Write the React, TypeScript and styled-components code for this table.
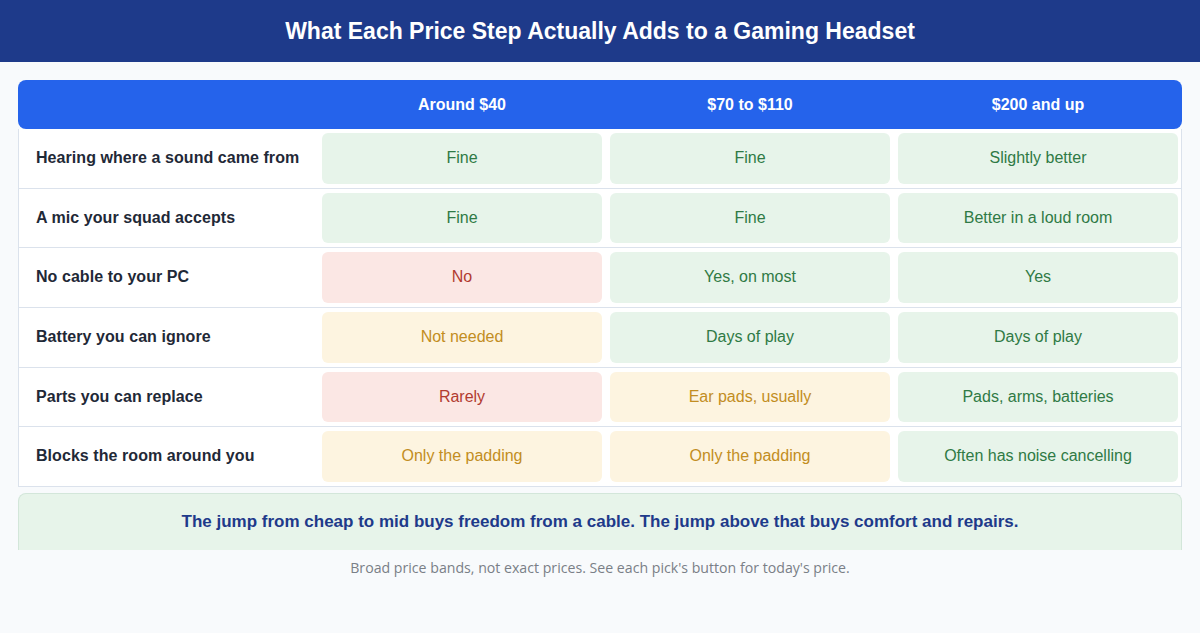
import React from "react";
import styled, { createGlobalStyle } from "styled-components";

const Global = createGlobalStyle`
  html, body { margin: 0; padding: 0; background: #f8fafc; }
  body { font-family: "Liberation Sans", Arial, sans-serif; }
  * { box-sizing: border-box; }
`;

const Page = styled.div`
  width: 1200px;
  height: 633px;
  background: #f8fafc;
  display: flex;
  flex-direction: column;
`;

const TitleBar = styled.header`
  height: 62px;
  background: #1e3a8a;
  display: flex;
  align-items: center;
  justify-content: center;
`;

const Title = styled.h1`
  margin: 0;
  color: #ffffff;
  font-size: 23px;
  font-weight: 700;
  font-family: "Liberation Sans", Arial, sans-serif;
`;

const Main = styled.main`
  padding: 18px 18px 0 18px;
  display: flex;
  flex-direction: column;
`;

const Table = styled.div`
  display: flex;
  flex-direction: column;
`;

const HeadRow = styled.div`
  display: grid;
  grid-template-columns: 1fr 280px 280px 280px;
  column-gap: 8px;
  padding: 0 4px 0 0;
  height: 49px;
  align-items: center;
  background: #2563eb;
  border-radius: 8px;
`;

const HeadCell = styled.div`
  color: #ffffff;
  font-size: 16px;
  font-weight: 700;
  text-align: center;
`;

const Row = styled.div`
  display: grid;
  grid-template-columns: 1fr 280px 280px 280px;
  column-gap: 8px;
  padding: 4px 3px 4px 0;
  background: #ffffff;
  border: 1px solid #dbe2ec;
  border-top: none;
  height: 59.7px;
`;

const Label = styled.div`
  display: flex;
  align-items: center;
  padding-left: 17px;
  padding-bottom: 1px;
  font-size: 16px;
  font-weight: 700;
  letter-spacing: 0.06px;
  color: #1f2937;
`;

type Tone = "good" | "bad" | "mid";

const tones: Record<Tone, { bg: string; fg: string }> = {
  good: { bg: "#e7f4ea", fg: "#2f7a45" },
  bad: { bg: "#fbe7e4", fg: "#b23b30" },
  mid: { bg: "#fdf4e0", fg: "#c28d22" },
};

const Cell = styled.div<{ $tone: Tone }>`
  display: flex;
  align-items: center;
  justify-content: center;
  padding-bottom: 1px;
  border-radius: 6px;
  background: ${(p) => tones[p.$tone].bg};
  color: ${(p) => tones[p.$tone].fg};
  font-size: 16px;
`;

const Callout = styled.div`
  margin-top: 6px;
  height: 57px;
  background: #e7f4ea;
  border: 1px solid #d3e6da;
  border-bottom: none;
  border-radius: 8px 8px 0 0;
  display: flex;
  align-items: center;
  justify-content: center;
  color: #1e3a8a;
  font-size: 17px;
  font-weight: 700;
`;

const Note = styled.p`
  margin: 8px 0 0 0;
  text-align: center;
  font-family: "Open Sans", "Noto Sans", sans-serif;
  font-size: 14.15px;
  color: #7a7f87;
`;

const columns = ["Around $40", "$70 to $110", "$200 and up"];

const rows: { label: string; cells: [string, Tone][] }[] = [
  { label: "Hearing where a sound came from", cells: [["Fine", "good"], ["Fine", "good"], ["Slightly better", "good"]] },
  { label: "A mic your squad accepts", cells: [["Fine", "good"], ["Fine", "good"], ["Better in a loud room", "good"]] },
  { label: "No cable to your PC", cells: [["No", "bad"], ["Yes, on most", "good"], ["Yes", "good"]] },
  { label: "Battery you can ignore", cells: [["Not needed", "mid"], ["Days of play", "good"], ["Days of play", "good"]] },
  { label: "Parts you can replace", cells: [["Rarely", "bad"], ["Ear pads, usually", "mid"], ["Pads, arms, batteries", "good"]] },
  { label: "Blocks the room around you", cells: [["Only the padding", "mid"], ["Only the padding", "mid"], ["Often has noise cancelling", "good"]] },
];

export default function App() {
  return (
    <Page>
      <Global />
      <TitleBar>
        <Title>What Each Price Step Actually Adds to a Gaming Headset</Title>
      </TitleBar>
      <Main>
        <Table>
          <HeadRow>
            <HeadCell />
            {columns.map((c) => (
              <HeadCell key={c}>{c}</HeadCell>
            ))}
          </HeadRow>
          {rows.map((r) => (
            <Row key={r.label}>
              <Label>{r.label}</Label>
              {r.cells.map(([t, tone], i) => (
                <Cell key={i} $tone={tone}>{t}</Cell>
              ))}
            </Row>
          ))}
        </Table>
        <Callout>
          The jump from cheap to mid buys freedom from a cable. The jump above that buys comfort and repairs.
        </Callout>
        <Note>Broad price bands, not exact prices. See each pick's button for today's price.</Note>
      </Main>
    </Page>
  );
}
